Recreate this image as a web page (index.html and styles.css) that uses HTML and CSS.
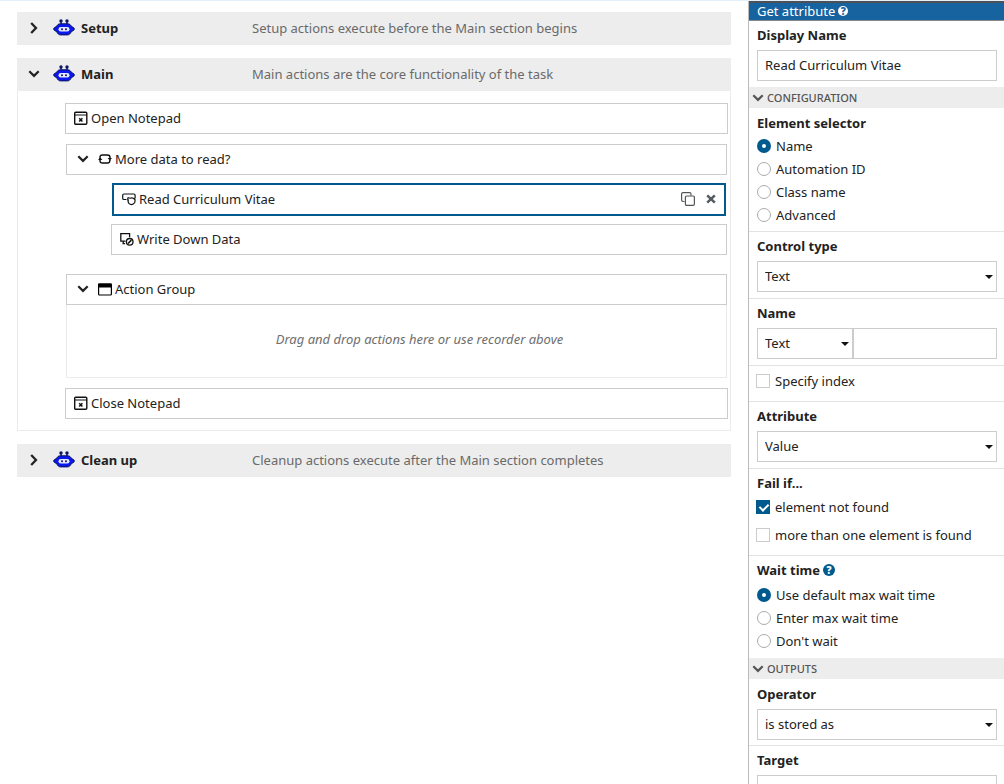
FILE: index.html
```html
<!DOCTYPE html>
<html lang="en">
<head>
<meta charset="utf-8">
<title>Task editor</title>
<link rel="stylesheet" href="styles.css">
</head>
<body>
<svg class="defs" aria-hidden="true">
  <symbol id="down" viewBox="0 0 12 12"><path d="M1.3 3.200 6 7.900l4.700-4.700" fill="none" stroke="currentColor" stroke-width="2.200"/></symbol>
  <symbol id="right" viewBox="0 0 12 12"><path d="M3.200 1 8 6l-4.800 5" fill="none" stroke="currentColor" stroke-width="2.300"/></symbol>
  <symbol id="robot" viewBox="0 0 22 17">
    <path d="M8 5V2M14 5V2" stroke="#0b1560" stroke-width="1.300"/>
    <circle cx="8" cy="2" r="1.700" fill="#0b1560"/><circle cx="14" cy="2" r="1.700" fill="#0b1560"/>
    <path d="M7.500 4.800h7c2 0 3 .9 3.500 2.100l3 2.200c.6.600.6 1.200 0 1.800l-3 2.200c-.7 1.800-1.800 2.800-3.500 2.800h-7c-1.700 0-2.800-1-3.500-2.800l-3-2.200c-.6-.6-.6-1.200 0-1.800l3-2.200c.5-1.200 1.500-2.100 3.500-2.100z" fill="#0a18ee" stroke="#0b1560" stroke-width="1"/>
    <rect x="5.500" y="8" width="11" height="4.600" rx="2.300" fill="#e4e7ff"/>
    <circle cx="9" cy="10.300" r="1" fill="#0b1560"/><circle cx="13" cy="10.300" r="1" fill="#0b1560"/>
  </symbol>
  <symbol id="app" viewBox="0 0 14 14"><g fill="none" stroke="#111"><rect x=".7" y="1.200" width="12.100" height="12" rx="1" stroke-width="1.400"/><path d="M1 4h12" stroke-width="1"/><path d="m5.200 7.200 3.200 3.400M8.400 7.200l-3.200 3.400" stroke-width="1.500"/></g></symbol>
  <symbol id="loop" viewBox="0 0 14 14"><path d="M2 7V5.500Q2 3 4.500 3h5Q12 3 12 5.500V7M12 7.500Q12 11 9.500 11h-5Q2 11 2 8.500V7" fill="none" stroke="#111" stroke-width="1.400"/><path d="M9.600 6h4.400L11.800 8.600zM0 8h4.400L2.200 5.400z" fill="#111"/></symbol>
  <symbol id="read" viewBox="0 0 14 14"><path d="M4.500 7.500H2Q.7 7.500.7 6.200V3.300Q.7 2 2 2h9.800q1.300 0 1.300 1.300V6" fill="none" stroke="#111" stroke-width="1.200"/><path d="M5.800 5.500 8 6.200q3-1.200 4.600 1.200M6.500 7.500q-1 2 .4 3.800 2 2 4.300.7 2.200-1.200 1.800-3.800l-.3-2.200M5.800 5.500v3" fill="none" stroke="#111" stroke-width="1.200"/></symbol>
  <symbol id="write" viewBox="0 0 14 14"><path d="M5.500 9.200H.8V1.600h8.800v3.600M2.500 11.600h2.600M3.200 9.200v2.400" fill="none" stroke="#111" stroke-width="1.300"/><circle cx="9.700" cy="9.800" r="3.300" fill="none" stroke="#111" stroke-width="1.300"/><path d="m8 11.500 3.400-3.400" stroke="#111" stroke-width="1.600"/></symbol>
  <symbol id="group" viewBox="0 0 14 14"><rect x=".6" y="2" width="12.800" height="11" rx="1" fill="none" stroke="#000" stroke-width="1.200"/><path d="M0 2q0-.6.600-.6h12.800q.6 0 .6.600v3.400H0z" fill="#000"/></symbol>
  <symbol id="copy" viewBox="0 0 14 14"><g fill="none" stroke="#555" stroke-width="1.200"><path d="M3.500 9.500H2Q.6 9.500.6 8.100V2Q.6.600 2 .6h6.600Q10 .6 10 2v1.500"/><rect x="4.400" y="4" width="9" height="9.400" rx="1.300"/></g></symbol>
  <symbol id="close" viewBox="0 0 10 10"><path d="m1.200 1.400 7.600 7.200M8.800 1.400 1.200 8.600" stroke="#555a5f" stroke-width="2.500"/></symbol>
</svg>
<div class="page">
  <main class="workspace">
    <section>
      <div class="section-head">
        <button class="toggle" aria-label="Expand Setup"><svg><use href="#right"/></svg></button>
        <svg class="robot"><use href="#robot"/></svg>
        <h2 class="section-name">Setup</h2>
        <p class="section-text">Setup actions execute before the Main section begins</p>
      </div>
    </section>
    <section>
      <div class="section-head">
        <button class="toggle" aria-label="Collapse Main"><svg><use href="#down"/></svg></button>
        <svg class="robot"><use href="#robot"/></svg>
        <h2 class="section-name">Main</h2>
        <p class="section-text">Main actions are the core functionality of the task</p>
      </div>
      <div class="section-body">
        <div class="action"><svg class="icon"><use href="#app"/></svg>Open Notepad</div>
        <div class="block">
          <div class="action parent">
            <button class="toggle" aria-label="Collapse loop"><svg><use href="#down"/></svg></button>
            <svg class="icon"><use href="#loop"/></svg>More data to read?
          </div>
          <div class="children">
            <div class="action selected">
              <svg class="icon"><use href="#read"/></svg><span class="action-name">Read Curriculum Vitae</span>
              <button class="tool" aria-label="Duplicate"><svg class="icon"><use href="#copy"/></svg></button>
              <button class="tool" aria-label="Remove"><svg class="cross"><use href="#close"/></svg></button>
            </div>
            <div class="action"><svg class="icon"><use href="#write"/></svg>Write Down Data</div>
          </div>
        </div>
        <div class="block">
          <div class="action parent">
            <button class="toggle" aria-label="Collapse group"><svg><use href="#down"/></svg></button>
            <svg class="icon"><use href="#group"/></svg>Action Group
          </div>
          <div class="drop-zone">Drag and drop actions here or use recorder above</div>
        </div>
        <div class="action"><svg class="icon"><use href="#app"/></svg>Close Notepad</div>
      </div>
    </section>
    <section>
      <div class="section-head">
        <button class="toggle" aria-label="Expand Clean up"><svg><use href="#right"/></svg></button>
        <svg class="robot"><use href="#robot"/></svg>
        <h2 class="section-name">Clean up</h2>
        <p class="section-text">Cleanup actions execute after the Main section completes</p>
      </div>
    </section>
  </main>

  <aside class="panel">
    <header class="panel-head">Get attribute <button class="help" aria-label="Help">?</button></header>
    <div class="field">
      <label class="title" for="display">Display Name</label>
      <input class="box" id="display" type="text" value="Read Curriculum Vitae">
    </div>
    <button class="bar"><svg><use href="#down"/></svg>CONFIGURATION</button>
    <fieldset class="field first">
      <legend class="title">Element selector</legend>
      <div class="choices">
        <label class="choice"><input type="radio" name="selector" checked>Name</label>
        <label class="choice"><input type="radio" name="selector">Automation ID</label>
        <label class="choice"><input type="radio" name="selector">Class name</label>
        <label class="choice"><input type="radio" name="selector">Advanced</label>
      </div>
    </fieldset>
    <div class="field ruled">
      <label class="title" for="control">Control type</label>
      <div class="select"><select class="box" id="control"><option>Text</option></select></div>
    </div>
    <div class="field ruled">
      <label class="title" for="name-value">Name</label>
      <div class="pair">
        <div class="select"><select class="box" aria-label="Name type"><option>Text</option></select></div>
        <input class="box" id="name-value" type="text">
      </div>
    </div>
    <div class="field ruled index">
      <label class="choice check"><input type="checkbox">Specify index</label>
    </div>
    <div class="field ruled">
      <label class="title" for="attribute">Attribute</label>
      <div class="select"><select class="box" id="attribute"><option>Value</option></select></div>
    </div>
    <fieldset class="field ruled">
      <legend class="title">Fail if...</legend>
      <label class="choice check"><input type="checkbox" checked>element not found</label>
      <label class="choice check"><input type="checkbox">more than one element is found</label>
    </fieldset>
    <fieldset class="field ruled">
      <legend class="title">Wait time <button class="help blue" aria-label="Help">?</button></legend>
      <div class="choices wait">
        <label class="choice"><input type="radio" name="wait" checked>Use default max wait time</label>
        <label class="choice"><input type="radio" name="wait">Enter max wait time</label>
        <label class="choice"><input type="radio" name="wait">Don't wait</label>
      </div>
    </fieldset>
    <button class="bar"><svg><use href="#down"/></svg>OUTPUTS</button>
    <div class="field first">
      <label class="title" for="operator">Operator</label>
      <div class="select"><select class="box" id="operator"><option>is stored as</option></select></div>
    </div>
    <div class="field ruled">
      <label class="title" for="target">Target</label>
      <input class="box" id="target" type="text">
    </div>
  </aside>
</div>
</body>
</html>
```
FILE: styles.css
```css
* { box-sizing: border-box; }
body {
  margin: 0;
  color: #222;
  background: #fff;
  font: 13px/20px "Noto Sans", sans-serif;
}
button, input, select { font: inherit; color: inherit; margin: 0; }
button { padding: 0; border: 0; background: none; }
h2, p { margin: 0; }
svg { display: block; flex: none; }
.defs { position: absolute; width: 0; height: 0; }

.page {
  display: flex;
  height: 100vh;
  overflow: hidden;
  border-top: 1px solid #e3f0fc;
}
.workspace {
  flex: 1;
  display: flex;
  flex-direction: column;
  gap: 13px;
  padding: 11px 17px;
}
.section-head {
  display: flex;
  align-items: center;
  height: 33px;
  padding: 0 0 2px 11px;
  background: #ededed;
}
.toggle svg { width: 12px; height: 12px; }
.robot { width: 22px; height: 17px; margin: 0 6px 0 13px; }
.section-name { width: 171px; font-size: 13px; line-height: 20px; }
.section-text { color: #6a6a6a; }

.section-body {
  display: flex;
  flex-direction: column;
  gap: 10px;
  padding: 12px 2px 11px 47px;
  border: 1px solid #ebebeb;
  border-top: 0;
}
.action {
  display: flex;
  align-items: center;
  height: 31px;
  padding: 0 8px 2px;
  border: 1px solid #ccc;
}
.icon { width: 14px; height: 14px; margin-right: 3px; }
.block { margin: 0 1px; }
.parent { padding-left: 10px; }
.parent .toggle { margin-right: 9px; }
.children {
  display: flex;
  flex-direction: column;
  gap: 8px;
  padding: 8px 0 9px 45px;
}
.selected { height: 33px; margin: 0 1px; border: 2px solid #005a8e; }
.action-name { flex: 1; }
.tool .icon { margin-right: 11px; }
.cross { width: 10px; height: 10px; }
.drop-zone {
  display: flex;
  align-items: center;
  justify-content: center;
  height: 73px;
  padding: 0 0 4px 46px;
  border: 1px solid #ebebeb;
  border-top: 0;
  color: #6e6e6e;
  font-style: italic;
}

.panel { flex: 0 0 256px; border-left: 1px solid #bbb; }
.panel-head {
  display: flex;
  align-items: center;
  gap: 3px;
  height: 20px;
  padding: 0 8px 1px;
  border-top: 2px solid #4d5156;
  border-bottom: 1px solid #8a8a8a;
  background: #17639f;
  color: #fff;
}
.help {
  width: 10px;
  height: 10px;
  border-radius: 50%;
  background: #fff;
  color: #17639f;
  font-size: 10px;
  font-weight: 900;
  line-height: 10px;
  text-align: center;
}
.help.blue { width: 12px; height: 12px; background: #005a8e; color: #fff; line-height: 12px; }
.field {
  display: flex;
  flex-direction: column;
  min-width: 0;
  margin: 0;
  padding: 4px 7px 6px 8px;
  border: 0;
}
.field.first { padding-top: 5px; padding-bottom: 5px; }
.field.ruled { border-top: 1px solid #e3e3e3; }
.title { display: flex; align-items: center; gap: 3px; height: 20px; padding: 0; font-weight: 700; }
legend.title { float: left; }
.box {
  display: block;
  width: 100%;
  height: 31px;
  padding: 0 7px 2px;
  border: 1px solid #ccc;
  border-radius: 0;
  background: #fff;
  appearance: none;
}
.title + .box, .title + .select, .title + .pair { margin-top: 5px; }
.select { position: relative; }
.select::after {
  content: "";
  position: absolute;
  right: 4px;
  top: 14px;
  border: 4px solid transparent;
  border-top-color: #111;
  border-bottom: 0;
}
.pair { display: grid; grid-template-columns: 96px 1fr; }
.bar {
  display: flex;
  align-items: center;
  gap: 3px;
  width: 100%;
  height: 21px;
  padding-left: 3px;
  background: #ededed;
  color: #555;
  font-size: 11px;
  font-weight: 500;
}
.bar svg { width: 12px; height: 12px; }
.choices { padding-top: 1px; }
.choices.wait { padding-top: 3px; }
.choice { display: flex; align-items: center; gap: 5px; height: 23px; }
.choice input {
  flex: none;
  width: 14px;
  height: 14px;
  border: 1px solid #aaa;
  border-radius: 50%;
  background: #fff;
  appearance: none;
}
.choice input[type="radio"]:checked { border: 5px solid #005a8e; }
.choice.check { height: 28px; margin-left: -1px; }
.choice.check input { border-color: #ccc; border-radius: 0; }
.choice.check input:checked {
  border-color: #005a8e;
  background: #005a8e;
}
.choice.check input:checked::after {
  content: "";
  display: block;
  width: 4px;
  height: 7px;
  margin: 1px 0 0 4px;
  border: solid #fff;
  border-width: 0 2px 2px 0;
  transform: rotate(45deg);
}
.field.index { padding-top: 1px; }
```
